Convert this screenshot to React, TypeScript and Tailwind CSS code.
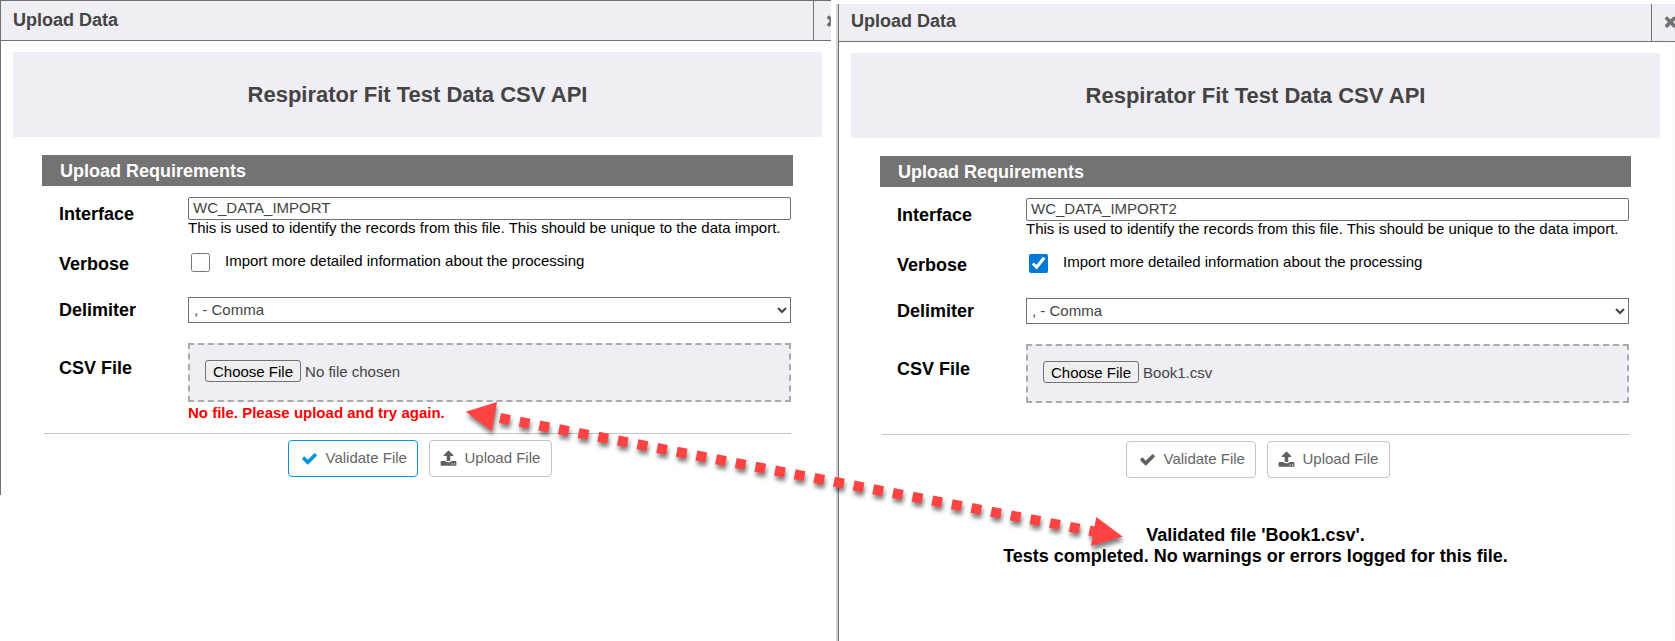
import { useEffect, useRef } from "react";
import type { ReactNode } from "react";

type UploadPanelProps = {
  id: string;
  name: string;
  verbose?: boolean;
  fileName?: string;
  error?: string;
  active?: boolean;
  scrollable?: boolean;
  children?: ReactNode;
};

// Icons
const icons = {
  check:
    "M1671 566q0 40-28 68l-724 724-136 136q-28 28-68 28t-68-28l-136-136-362-362q-28-28-28-68t28-68l136-136q28-28 68-28t68 28l294 295 656-657q28-28 68-28t68 28l136 136q28 28 28 68z",
  times:
    "M1490 1322q0 40-28 68l-136 136q-28 28-68 28t-68-28l-294-294-294 294q-28 28-68 28t-68-28l-136-136q-28-28-28-68t28-68l294-294-294-294q-28-28-28-68t28-68l136-136q28-28 68-28t68 28l294 294 294-294q28-28 68-28t68 28l136 136q28 28 28 68t-28 68l-294 294 294 294q28 28 28 68z",
  upload:
    "M1344 1472q0-26-19-45t-45-19-45 19-19 45 19 45 45 19 45-19 19-45zm256 0q0-26-19-45t-45-19-45 19-19 45 19 45 45 19 45-19 19-45zm128-224v320q0 40-28 68t-68 28h-1472q-40 0-68-28t-28-68v-320q0-40 28-68t68-28h427q21 56 70.500 92t110.500 36h256q61 0 110.500-36t70.500-92h427q40 0 68 28t28 68zm-325-648q-17 40-59 40h-256v448q0 26-19 45t-45 19h-256q-26 0-45-19t-19-45v-448h-256q-42 0-59-40-17-39 14-69l448-448q18-19 45-19t45 19l448 448q31 30 14 69z",
};

const Icon = ({ name, className }: { name: keyof typeof icons; className: string }) => (
  <svg viewBox="0 0 1792 1792" fill="currentColor" aria-hidden="true" className={`size-[17px] shrink-0 ${className}`}>
    <path d={icons[name]} />
  </svg>
);

type RowProps = { label: string; htmlFor: string; className: string; labelClass: string; children: ReactNode };

const Row = ({ label, htmlFor, className, labelClass, children }: RowProps) => (
  <div className={`flex items-start pl-[17px] pr-[2px] ${className}`}>
    <label htmlFor={htmlFor} className={`w-[129px] shrink-0 text-lg leading-5 font-bold ${labelClass}`}>{label}</label>
    <div className="min-w-0 flex-1">{children}</div>
  </div>
);

const UploadPanel = ({ id, name, verbose, fileName, error, active, scrollable, children }: UploadPanelProps) => {
  const fileRef = useRef<HTMLInputElement>(null);

  // Preselect the file when there is one
  useEffect(() => {
    if (fileName && fileRef.current) {
      const transfer = new DataTransfer();
      transfer.items.add(new File([""], fileName, { type: "text/csv" }));
      fileRef.current.files = transfer.files;
    }
  }, [fileName]);

  return (
    <section className="flex min-w-0 flex-1 flex-col overflow-hidden border-l border-[#717171] bg-white">
      {/* Title bar */}
      <header className={`flex shrink-0 border-b border-[#717171] bg-[#efeef4] ${scrollable ? "h-[38px]" : "h-[41px] border-t"}`}>
        <h1 className={`flex-1 pl-3 text-lg leading-5 font-bold text-[#444] ${scrollable ? "pt-[7px]" : "pt-[9px]"}`}>Upload Data</h1>
        <button
          aria-label="Close"
          className={`flex shrink-0 items-center overflow-hidden border-l border-[#717171] pl-[10px] text-[#717171] ${scrollable ? "w-6 pb-[2px]" : "w-[18px]"}`}
        >
          <Icon name="times" className="" />
        </button>
      </header>

      <div className="flex flex-1">
        <div className="min-w-0 flex-1 pt-[11px] pr-[9px] pl-3">
          <div className="flex h-[85px] items-center justify-center bg-[#efeef4]">
            <h2 className="text-[22px] leading-6 font-bold text-[#444]">Respirator Fit Test Data CSV API</h2>
          </div>

          <form className="mt-[18px] mr-[29px] ml-[29px]" onSubmit={(e) => e.preventDefault()}>
            <h3 className="bg-[#737373] pt-px pl-[18px] text-lg leading-[30px] font-bold text-white">Upload Requirements</h3>

            <Row label="Interface" htmlFor={`${id}-name`} className="mt-[11px]" labelClass="pt-[7px]">
              <input
                id={`${id}-name`}
                type="text"
                defaultValue={name}
                className="block h-[23px] w-full rounded-[2px] border border-[#717171] bg-white px-1 pb-[2px] text-[#444]"
              />
              <p className="leading-[15px]">This is used to identify the records from this file. This should be unique to the data import.</p>
            </Row>

            <Row label="Verbose" htmlFor={`${id}-verbose`} className="mt-3" labelClass="pt-[7px]">
              <div className="flex h-[30px] items-start pl-[3px]">
                <input id={`${id}-verbose`} type="checkbox" defaultChecked={verbose} className="mt-[6px] size-[19px] accent-[#0078d7]" />
                <span className="ml-[15px] pt-[5px] leading-[17px]">Import more detailed information about the processing</span>
              </div>
            </Row>

            <Row label="Delimiter" htmlFor={`${id}-delimiter`} className="mt-5" labelClass="pt-[3px]">
              <select
                id={`${id}-delimiter`}
                className="block h-[26px] w-full rounded-none border border-[#717171] bg-white pr-[3px] pb-px pl-px text-[#444]"
              >
                <option>, - Comma</option>
              </select>
            </Row>

            <Row label="CSV File" htmlFor={`${id}-file`} className="mt-5" labelClass="pt-[15px]">
              <div className="h-[59px] border-2 border-dashed border-[#aaa] bg-[#efeef4] px-[15px] pt-[15px]">
                <input
                  id={`${id}-file`}
                  ref={fileRef}
                  type="file"
                  accept=".csv"
                  className="block w-full text-[#444] file:mr-1 file:h-[22px] file:rounded-[3px] file:border file:border-solid file:border-[#717171] file:bg-[#efefef] file:px-[7px] file:text-black"
                />
              </div>
              <p className="mt-[2px] h-[18px] leading-[18px] font-bold text-[#f00]">{error}</p>
            </Row>

            <hr className="mt-[11px] mr-[2px] ml-[2px] border-[#c4c4c4]" />

            <div className="mt-[6px] flex justify-center gap-[11px] pl-1 text-[#666]">
              <button className={`flex h-[37px] w-[130px] items-center rounded border pl-3 ${active ? "border-[#0a93d6]" : "border-[#c4c4c4]"}`}>
                <Icon name="check" className={`mr-2 ${active ? "text-[#0a93d6]" : "text-[#5f6062]"}`} />
                Validate File
              </button>
              <button className="flex h-[37px] w-[123px] items-center rounded border border-[#c4c4c4] pl-[10px]">
                <Icon name="upload" className="mr-2 text-[#5f6062]" />
                Upload File
              </button>
            </div>
          </form>
          {children}
        </div>
        {scrollable && <div className="w-[6px] shrink-0 border-l-2 border-white bg-[#fbfbfb]" />}
      </div>
    </section>
  );
};

// Dotted arrow that ties the error to the validated result
const Arrow = () => (
  <svg
    aria-hidden="true"
    width="1675"
    height="641"
    viewBox="0 0 1675 641"
    className="pointer-events-none absolute top-0 left-0 drop-shadow-[1px_4px_2px_rgba(0,0,0,0.5)]"
  >
    <path d="M500 418 L1097 532" fill="none" stroke="#ff4343" strokeWidth="10" strokeDasharray="10 10" />
    <path d="M465.7 411.7 L497 402 L492 431.3 Z M1122.7 536.7 L1096.3 517 L1091 546 Z" fill="#ff4343" />
  </svg>
);

export default function App() {
  return (
    <main className="relative grid min-h-screen grid-cols-[831fr_839fr] gap-[5px] overflow-hidden bg-white font-['Liberation_Sans',Arial,sans-serif] text-[15px] text-black">
      <div className="flex h-[495px] min-w-0">
        <UploadPanel id="left" name="WC_DATA_IMPORT" error="No file. Please upload and try again." active />
      </div>

      <div className="mt-1 flex min-w-0">
        {/* Edge of the page behind the window */}
        <div className="w-[2px] bg-[#d3d5d7]" />
        <UploadPanel id="right" name="WC_DATA_IMPORT2" verbose fileName="Book1.csv" scrollable>
          <p role="status" className="mt-[47px] text-center text-lg leading-[21px] font-bold">
            Validated file 'Book1.csv'.
            <br />
            Tests completed. No warnings or errors logged for this file.
          </p>
        </UploadPanel>
      </div>
      <Arrow />
    </main>
  );
}
